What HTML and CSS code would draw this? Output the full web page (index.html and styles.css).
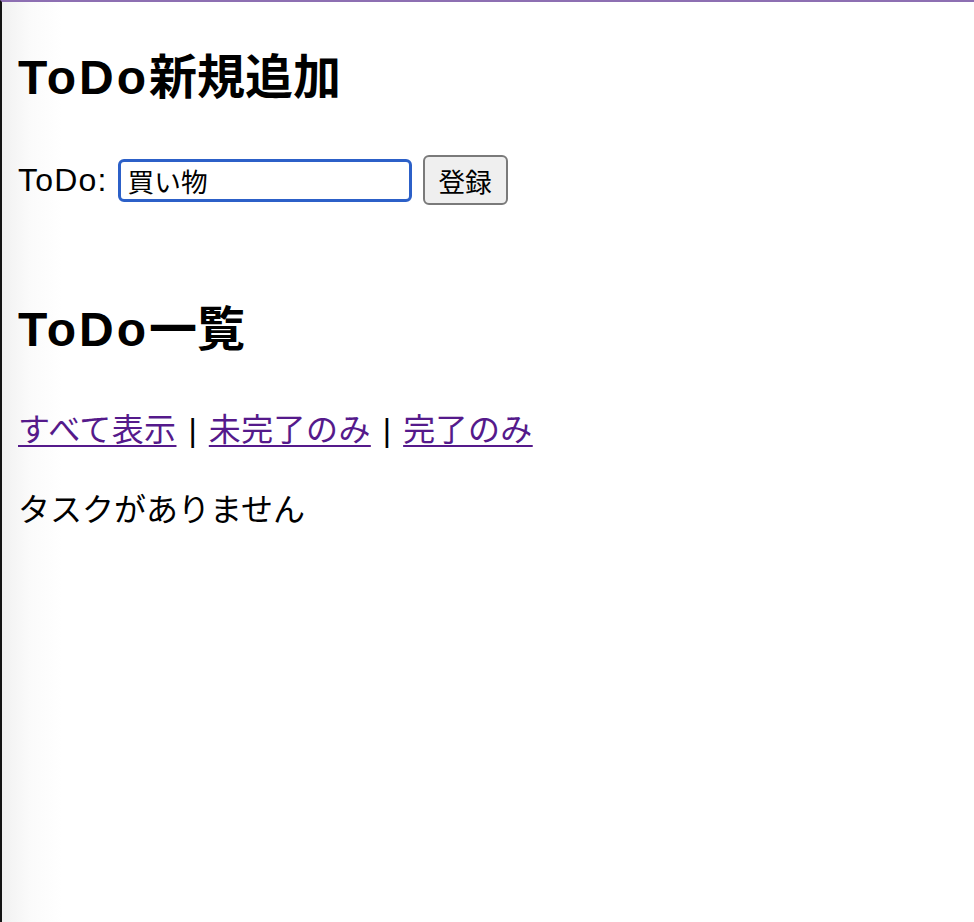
FILE: index.html
```html
<!DOCTYPE html>
<html lang="ja">
<head>
<meta charset="utf-8">
<title>ToDo</title>
<link rel="stylesheet" href="styles.css">
</head>
<body>
<h2 class="heading"><span class="latin">ToDo</span>新規追加</h2>
<form class="todo-form">
  <label class="todo-label" for="todo">ToDo:</label>
  <input class="todo-input" id="todo" type="text" value="買い物">
  <button class="todo-button" type="button">登録</button>
</form>
<h2 class="heading"><span class="latin">ToDo</span>一覧</h2>
<p class="filters"><a class="filter-link" href="#all">すべて表示</a><span class="sep">|</span><a class="filter-link" href="#active">未完了のみ</a><span class="sep">|</span><a class="filter-link" href="#done">完了のみ</a></p>
<p class="empty">タスクがありません</p>
</body>
</html>
```
FILE: styles.css
```css
html {
  border-top: 2px solid #8d6fb2;
  border-left: 2px solid #141414;
  background: linear-gradient(to right, #f1f1f1 0px, #fbfbfb 30px, #ffffff 60px);
  min-height: 100%;
  box-sizing: border-box;
}

body {
  margin: 0 16px;
  font-family: "Liberation Sans", "Noto Sans CJK JP", sans-serif;
  font-size: 32px;
  line-height: 48px;
  color: #000;
}

.heading {
  font-size: 48px;
  line-height: 72px;
  font-weight: bold;
  margin: 40px 0;
}

.latin {
  letter-spacing: 3px;
}

.todo-form {
  display: flex;
  align-items: center;
  height: 52px;
  margin: 0 0 88px;
}

.todo-label {
  letter-spacing: 1.2px;
  margin-right: 10px;
}

.todo-input {
  box-sizing: border-box;
  width: 294px;
  height: 43px;
  border: 3px solid #2c60c8;
  border-radius: 6px;
  padding: 0 7px;
  font-family: "Liberation Sans", "Noto Sans CJK JP", sans-serif;
  font-size: 26.67px;
  color: #000;
  background: #fff;
  outline: none;
  margin-right: 11px;
}

.todo-button {
  box-sizing: border-box;
  width: 85px;
  height: 50px;
  border: 2px solid #7a7a7a;
  border-radius: 6px;
  background: #efefef;
  font-family: "Liberation Sans", "Noto Sans CJK JP", sans-serif;
  font-size: 26.67px;
  color: #000;
  padding: 0;
}

.filters {
  margin: 0 0 32px;
}

.filter-link {
  color: #551a8b;
  letter-spacing: 0.4px;
  text-decoration: underline;
  text-decoration-thickness: 2px;
  text-underline-offset: 4px;
}

.sep {
  margin: 0 12px;
}

.empty {
  margin: 0;
}
```
